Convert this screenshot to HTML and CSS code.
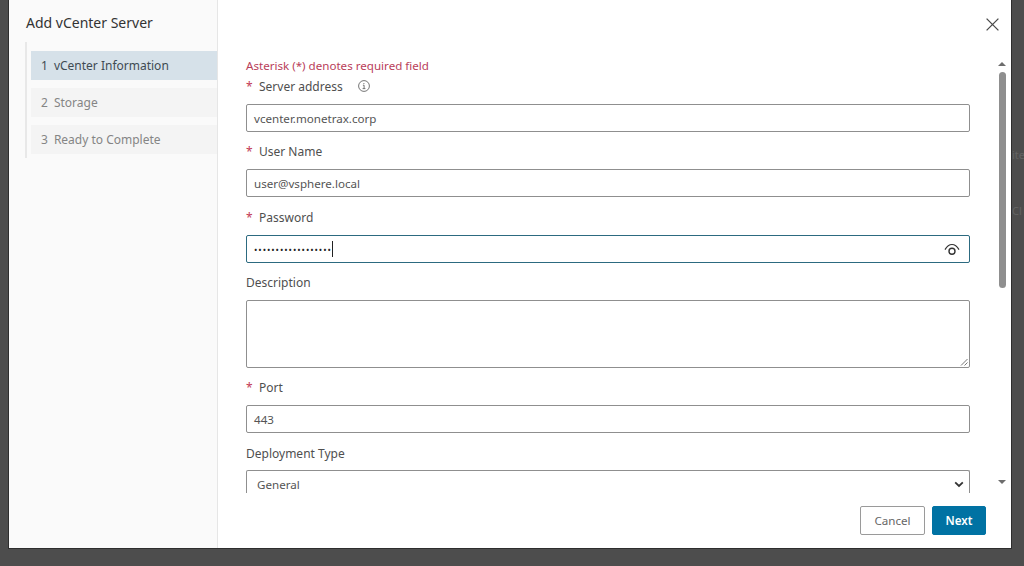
FILE: index.html
```html
<!DOCTYPE html>
<html lang="en">
<head>
<meta charset="utf-8">
<title>Add vCenter Server</title>
<link rel="stylesheet" href="styles.css">
</head>
<body>
<span class="behind behind-a">ite</span>
<span class="behind behind-b">Cl</span>
<div class="modal">
  <aside class="side">
    <h1 class="title">Add vCenter Server</h1>
    <ol class="steps">
      <li class="step active"><span class="num">1</span><span>vCenter Information</span></li>
      <li class="step"><span class="num">2</span><span>Storage</span></li>
      <li class="step"><span class="num">3</span><span>Ready to Complete</span></li>
    </ol>
  </aside>
  <main class="main">
    <div class="close-row">
      <svg class="close" width="13" height="13" viewBox="0 0 13 13"><path d="M.6.6l11.8 11.8M12.4.6L.6 12.4" fill="none" stroke="#4a4a4a" stroke-width="1.3"/></svg>
    </div>
    <div class="body">
      <form class="form">
        <p class="note">Asterisk (*) denotes required field</p>
        <div class="label-row first"><span class="star">*</span><label>Server address</label>
          <svg class="info" width="12" height="12" viewBox="0 0 12 12"><circle cx="6" cy="6" r="5.4" fill="none" stroke="#666" stroke-width=".9"/><path d="M4.9 5.2h1.2v3.3M4.6 8.6h2.8M5.9 3v1" fill="none" stroke="#666" stroke-width=".9"/></svg>
        </div>
        <div class="input">vcenter.monetrax.corp</div>
        <div class="label-row"><span class="star">*</span><label>User Name</label></div>
        <div class="input">user@vsphere.local</div>
        <div class="label-row"><span class="star">*</span><label>Password</label></div>
        <div class="input focus"><span class="dots">••••••••••••••••••</span><span class="caret"></span>
          <svg class="eye" width="16" height="13" viewBox="0 0 16 13"><path d="M1 6.6C3 3.2 5.5 1.5 8 1.5s5 1.7 7 5.1" fill="none" stroke="#333" stroke-width="1.2"/><circle cx="8" cy="8.2" r="3" fill="none" stroke="#333" stroke-width="1.4"/></svg>
        </div>
        <div class="label-row"><label>Description</label></div>
        <div class="input area">
          <svg class="grip" width="8" height="8" viewBox="0 0 8 8"><path d="M7.5 1L1 7.5M7.5 4.5L4.5 7.5" stroke="#777" stroke-width="1" fill="none"/></svg>
        </div>
        <div class="label-row"><span class="star">*</span><label>Port</label></div>
        <div class="input">443</div>
        <div class="label-row"><label>Deployment Type</label></div>
        <div class="input select"><span>General</span>
          <svg width="10" height="7" viewBox="0 0 10 7"><path d="M1.2 1.4L5 5l3.8-3.6" fill="none" stroke="#333" stroke-width="1.8"/></svg>
        </div>
      </form>
      <div class="scrollbar">
        <span class="arrow up"></span>
        <span class="thumb"></span>
        <span class="arrow down"></span>
      </div>
    </div>
    <div class="footer">
      <button class="btn cancel" type="button">Cancel</button>
      <button class="btn next" type="button">Next</button>
    </div>
  </main>
</div>
</body>
</html>
```
FILE: styles.css
```css
* { box-sizing: border-box; }
html, body { margin: 0; height: 100%; }
body {
  background: #4d4d4d;
  font-family: "Noto Sans", "Open Sans", sans-serif;
  font-size: 12px;
  color: #565656;
  overflow: hidden;
  padding-left: 8px;
}
.behind {
  position: absolute;
  left: 1012px;
  color: #636363;
  font-size: 11px;
  line-height: 14px;
}
.behind-a { top: 148px; }
.behind-b { top: 204px; }
.modal {
  position: relative;
  width: 1004px;
  height: 549px;
  display: flex;
  background: #fff;
  border-bottom: 1px solid #2e2e2e;
  border-left: 1px solid #2e2e2e;
  border-right: 1px solid #2e2e2e;
}
.side {
  width: 209px;
  flex: none;
  background: #fafafa;
  border-right: 1px solid #e6e6e6;
  padding: 14px 0 0 16px;
}
.title {
  margin: 0 0 10px 1px;
  font-size: 14px;
  font-weight: 400;
  line-height: 18px;
  color: #333;
}
.steps {
  list-style: none;
  margin: 0;
  padding: 9px 0 4px 4px;
  border-left: 2px solid #e8e8e8;
  display: flex;
  flex-direction: column;
  gap: 8px;
}
.step {
  height: 29px;
  display: flex;
  align-items: center;
  gap: 6px;
  padding: 0 0 1px 10px;
  background: #f4f4f4;
  color: #858585;
}
.step.active { background: #d6e1e9; color: #3f4b53; padding-bottom: 0; }
.main {
  flex: 1;
  min-width: 0;
  display: flex;
  flex-direction: column;
}
.close-row {
  height: 58px;
  flex: none;
  display: flex;
  justify-content: flex-end;
  padding: 18px 12px 0 0;
}
.body {
  height: 435px;
  flex: none;
  display: flex;
  overflow: hidden;
}
.form {
  width: 752px;
  flex: none;
  padding-left: 28px;
  overflow: hidden;
}
.note {
  margin: 0;
  line-height: 16px;
  font-size: 11.6px;
  color: #b9405a;
}
.label-row {
  height: 20px;
  margin: 10px 0 7.3px;
  display: flex;
  align-items: center;
  color: #4f4f4f;
}
.label-row.first { margin-top: 2px; margin-bottom: 7.95px; }
.star { color: #c23a55; width: 13px; }
.info { margin-left: 15px; }
.input {
  height: 28px;
  border: 1px solid #8f8f8f;
  border-radius: 2px;
  padding: 1px 7px 0;
  display: flex;
  align-items: center;
  font-size: 11.6px;
  color: #555;
  background: #fff;
  position: relative;
}
.input.focus {
  border-color: #2c6a80;
  padding-right: 9px;
}
.dots { font-size: 9px; letter-spacing: .94px; color: #222; }
.caret { width: 1px; height: 16px; background: #222; }
.eye { margin-left: auto; }
.area { height: 68px; }
.grip { position: absolute; right: 1px; bottom: 1px; }
.select {
  padding: 0 5px 0 10px;
  justify-content: space-between;
  margin-bottom: -6px;
  border-bottom: 0;
}
.scrollbar {
  width: 12px;
  margin-left: 26px;
  display: flex;
  flex-direction: column;
  align-items: center;
}
.arrow { width: 0; height: 0; border-left: 4px solid transparent; border-right: 4px solid transparent; flex: none; }
.arrow.up { border-bottom: 4px solid #6d6d6d; margin-top: 4px; margin-bottom: 6px; }
.arrow.down { border-top: 4px solid #6d6d6d; margin-top: auto; margin-bottom: 9px; }
.thumb { width: 7px; height: 216px; background: #8f8f8f; border-radius: 4px; flex: none; }
.footer {
  flex: 1;
  display: flex;
  justify-content: flex-end;
  align-items: flex-start;
  gap: 7px;
  padding: 13px 25px 0 0;
}
.btn {
  height: 29px;
  border-radius: 2px;
  font: inherit;
  font-size: 11.6px;
  padding: 0;
}
.cancel { width: 65px; background: #fff; border: 1px solid #9a9a9a; color: #666; }
.next { width: 54px; background: #0072a3; border: 1px solid #0072a3; color: #fff; font-weight: 600; }
```
